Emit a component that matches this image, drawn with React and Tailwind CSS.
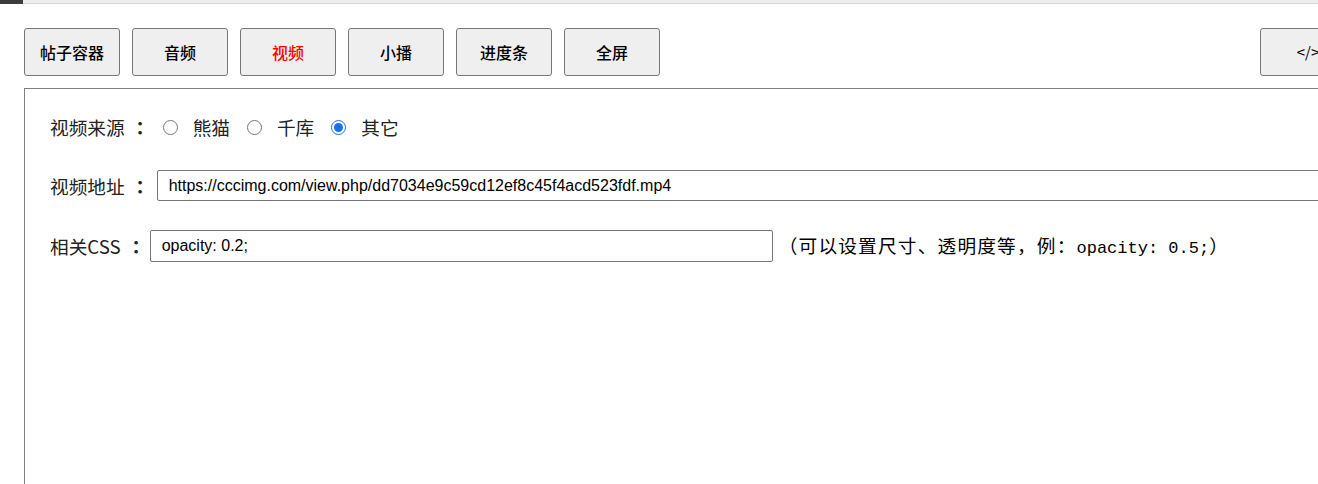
import React, { useState } from 'react';

const tabs = ['帖子容器', '音频', '视频', '小播', '进度条', '全屏'];

const TabButton = ({ label, active }) => (
  <button
    className={
      'w-24 h-12 shrink-0 rounded-[3px] border border-[#767676] bg-[#efefef] text-[16px] font-medium ' +
      (active ? 'text-[#ff0000]' : 'text-black')
    }
  >
    {label}
  </button>
);

const Colon = () => (
  <span className="ml-[6px] w-[18px] text-center font-bold" style={{ fontFamily: '"Noto Sans CJK TC", sans-serif' }}>
    ：
  </span>
);

export default function App() {
  const [source, setSource] = useState('other');
  const [url, setUrl] = useState('https://cccimg.com/view.php/dd7034e9c59cd12ef8c45f4acd523fdf.mp4');
  const [css, setCss] = useState('opacity: 0.2;');

  const sources = [
    { key: 'panda', label: '熊猫' },
    { key: 'qianku', label: '千库' },
    { key: 'other', label: '其它' },
  ];

  return (
    <div className="w-full h-[484px] overflow-hidden bg-white" style={{ fontFamily: '"Noto Sans CJK SC", sans-serif' }}>
      <div className="w-[1380px]">
        <div className="flex h-[4px]">
          <div className="w-[23px] bg-[#3c3c3c]" />
          <div className="flex-1 bg-[#eeeeee] border-b border-[#d8d8d8]" />
        </div>

        <div className="flex items-center mt-[24px] px-6">
          <div className="flex gap-3">
            {tabs.map((t) => (
              <TabButton key={t} label={t} active={t === '视频'} />
            ))}
          </div>
          <div className="flex-1" />
          <button className="w-24 h-12 shrink-0 rounded-[3px] border border-[#767676] bg-[#efefef] text-[15px] text-black">
            &lt;/&gt;
          </button>
        </div>

        <div className="mx-6 mt-3 h-[420px] border border-[#808080] pl-[25px] pr-6 pt-[22px] text-[18.67px] text-[#222]">
          <div className="flex items-center h-8">
            <span>视频来源</span>
            <Colon />
            {sources.map((s, i) => (
              <label key={s.key} className={'flex items-center ' + (i === 0 ? 'ml-[14px]' : 'ml-[17px]')}>
                <input
                  type="radio"
                  name="src"
                  checked={source === s.key}
                  onChange={() => setSource(s.key)}
                  className="m-0 w-[15px] h-[15px] accent-[#1a73e8]"
                />
                <span className="ml-[15px]">{s.label}</span>
              </label>
            ))}
          </div>

          <div className="flex items-center mt-[27px]">
            <span>视频地址</span>
            <Colon />
            <input
              value={url}
              onChange={(e) => setUrl(e.target.value)}
              className="ml-[8px] flex-1 h-[31px] rounded-[2px] border border-[#767676] px-[11px] text-[16px] text-black outline-none"
              style={{ fontFamily: '"Liberation Sans", Arial, sans-serif' }}
            />
          </div>

          <div className="flex items-center mt-[29px]">
            <span>相关CSS</span>
            <Colon />
            <input
              value={css}
              onChange={(e) => setCss(e.target.value)}
              className="ml-[5px] w-[623px] h-[32px] rounded-[2px] border border-[#767676] px-[11px] text-[16px] text-black outline-none"
              style={{ fontFamily: '"Liberation Sans", Arial, sans-serif' }}
            />
            <span className="ml-[6px] text-[18.67px] text-black tracking-[1.2px]">
              （可以设置尺寸、透明度等，例：
              <span className="text-[17px] tracking-normal" style={{ fontFamily: '"Liberation Mono", monospace' }}>
                opacity: 0.5;
              </span>
              ）
            </span>
          </div>
        </div>
      </div>
    </div>
  );
}
